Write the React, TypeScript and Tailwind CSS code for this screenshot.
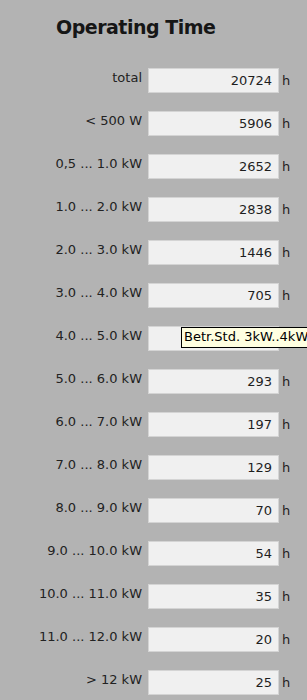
import React from "react";

type Row = { label: string; value: string };

const rows: Row[] = [
  { label: "total", value: "20724" },
  { label: "< 500 W", value: "5906" },
  { label: "0,5 ... 1.0 kW", value: "2652" },
  { label: "1.0 ... 2.0 kW", value: "2838" },
  { label: "2.0 ... 3.0 kW", value: "1446" },
  { label: "3.0 ... 4.0 kW", value: "705" },
  { label: "4.0 ... 5.0 kW", value: "" },
  { label: "5.0 ... 6.0 kW", value: "293" },
  { label: "6.0 ... 7.0 kW", value: "197" },
  { label: "7.0 ... 8.0 kW", value: "129" },
  { label: "8.0 ... 9.0 kW", value: "70" },
  { label: "9.0 ... 10.0 kW", value: "54" },
  { label: "10.0 ... 11.0 kW", value: "35" },
  { label: "11.0 ... 12.0 kW", value: "20" },
  { label: "> 12 kW", value: "25" },
];

const App = () => {
  return (
    <div
      className="w-[307px] h-[700px] overflow-hidden bg-[#b3b3b3] text-[#1e1e1e]"
      style={{ fontFamily: '"DejaVu Sans", Verdana, sans-serif' }}
    >
      <div className="pt-[16px] pl-[56px] text-[19px] leading-[22px] font-bold tracking-[-0.5px] text-[#161616]">
        Operating Time
      </div>
      <div className="mt-[30px] flex flex-col gap-[18px]">
        {rows.map((row, i) => (
          <div key={i} className="relative flex flex-row items-start h-[25px]">
            <div className="w-[142px] mt-[2px] text-right text-[13px] leading-[16px] text-[#222]">
              {row.label}
            </div>
            <div className="ml-[6px] w-[131px] h-[25px] border border-[#d4d4d4] bg-[#f0f0f0] flex items-center justify-end pr-[6px] text-[13px] leading-[16px]">
              {row.value}
            </div>
            {i !== 6 && (
              <div className="ml-[3px] mt-[5px] text-[13px] leading-[16px]">h</div>
            )}
            {i === 6 && (
              <div className="absolute left-[181px] top-[1px] w-[140px] h-[21px] border border-black bg-[#ffffe1] pl-[2px] text-[13px] leading-[17px] text-black whitespace-nowrap">
                Betr.Std. 3kW..4kW
              </div>
            )}
          </div>
        ))}
      </div>
    </div>
  );
};

export default App;
